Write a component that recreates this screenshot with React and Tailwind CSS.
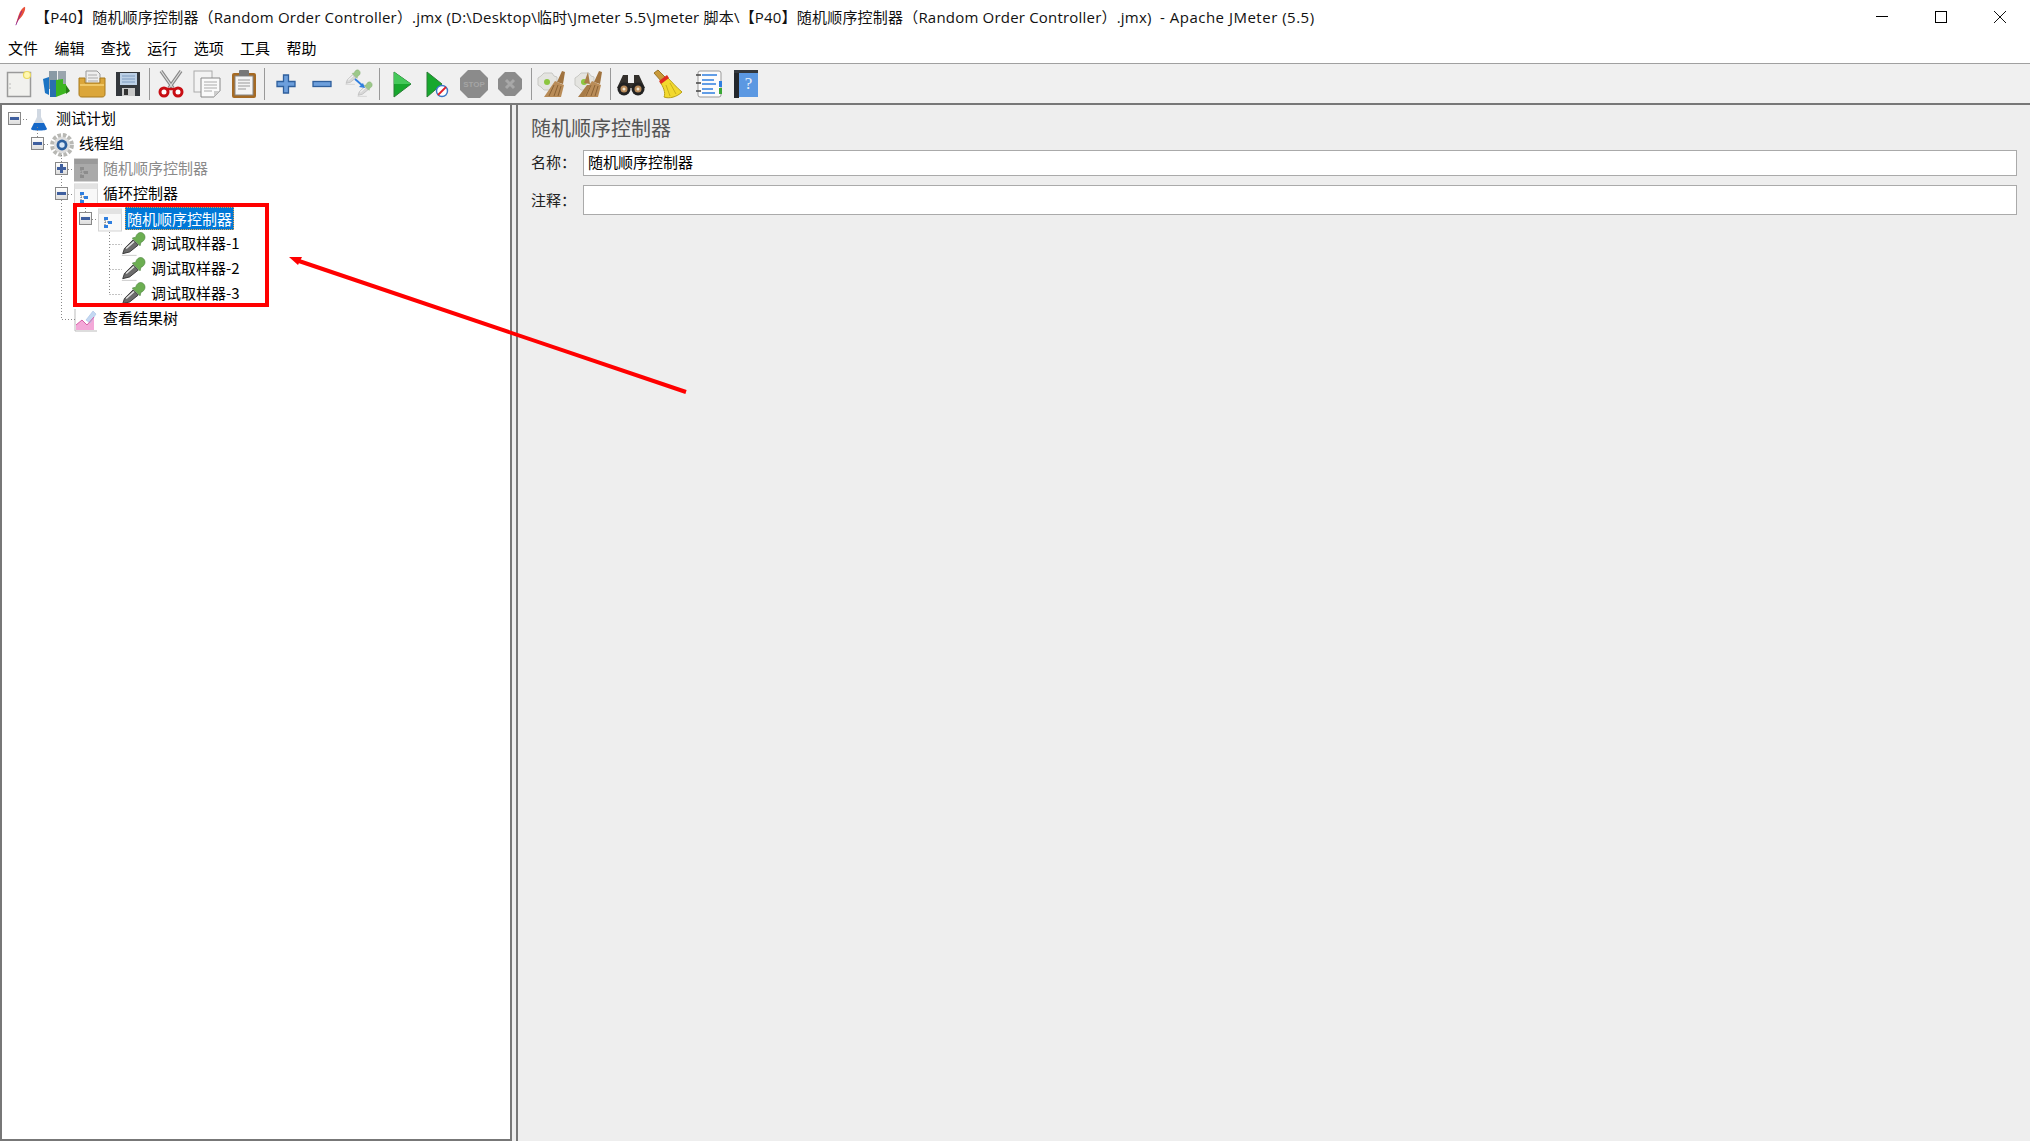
const CJK = `font-['Noto_Sans_CJK_SC','Noto_Sans',sans-serif]`;

function Svg({ children, className = 'w-[30px] h-[30px]' }) {
  return <svg viewBox="0 0 30 30" className={`shrink-0 ${className}`}>{children}</svg>;
}

const Dropper = ({ x = 0, y = 0, s = 1, pale }) => (
  <g transform={`translate(${x} ${y}) scale(${s})`}>
    <path d="M2 26 L4 20 L14 10 L20 16 L10 24 Z" fill={pale ? '#d8d8d8' : '#6c6c6c'} stroke={pale ? '#aaa' : '#2c2c2c'} strokeWidth="1" />
    <path d="M6 20 L15 12" stroke={pale ? '#fff' : '#e6e6e6'} strokeWidth="1.8" />
    <path d="M13 8 L22 17 L23 13 C28 11 29 6 26 3 C23 0 18 2 17 7 Z" fill={pale ? '#9cc88a' : '#6cae52'} stroke={pale ? '#7fa86c' : '#48803a'} strokeWidth="0.7" />
    <path d="M1 28 H18" stroke="#c4c4c4" strokeWidth="1" />
  </g>
);

function IconNew() {
  return (
    <Svg>
      <rect x="3.5" y="3.5" width="23" height="24" fill="#f1f1ee" stroke="#9a9a9a" strokeWidth="1.5" />
      <circle cx="6" cy="15" r="0.7" fill="#aaa" /><circle cx="6" cy="19" r="0.7" fill="#aaa" />
      <circle cx="23" cy="6" r="3.5" fill="#fff7b0" stroke="#e8d860" strokeWidth="1.2" />
    </Svg>
  );
}
function IconTemplates() {
  return (
    <Svg>
      <rect x="8" y="2" width="8" height="18" fill="#8a9aa5" /><rect x="17" y="2" width="8" height="18" fill="#9aa5ad" />
      <path d="M2 10 L8 8 V26 L4 24 Z" fill="#1c74c4" />
      <rect x="9" y="11" width="6" height="17" fill="#2a6fb0" />
      <path d="M15 11 L22 10 V15 L25 15 V24 L15 28 Z" fill="#3cb521" />
      <path d="M25 16 L29 22 L25 25 Z" fill="#2a7f18" />
    </Svg>
  );
}
function IconOpen() {
  return (
    <Svg>
      <path d="M9 2 H20 L23 5 V16 H9 Z" fill="#eee" stroke="#999" />
      <path d="M11 6 H20 M11 9 H21 M11 12 H21" stroke="#aaa" />
      <path d="M2 9 H8 V14 H23 V9 H28 V25 C28 27 27 28 25 28 H5 C3 28 2 27 2 25 Z" fill="#dba63a" stroke="#a87a1e" />
      <path d="M3 16 H27" stroke="#f0c868" strokeWidth="2" />
    </Svg>
  );
}
function IconSave() {
  return (
    <Svg>
      <path d="M3 3 H27 V27 H3 Z" fill="#33373c" />
      <rect x="7" y="4" width="17" height="12" fill="#bcd0e6" />
      <path d="M9 7 H22 M9 10 H22 M9 13 H22" stroke="#7e9cc0" />
      <rect x="9" y="19" width="13" height="8" fill="#c8c8c8" /><rect x="11" y="20" width="4" height="6" fill="#333" />
    </Svg>
  );
}
function IconCut() {
  return (
    <Svg>
      <path d="M5 2 L17 19 M25 2 L13 19" stroke="#888" strokeWidth="3.4" />
      <path d="M5 2 L17 19 M25 2 L13 19" stroke="#ddd" strokeWidth="1.2" />
      <circle cx="8" cy="23" r="4" fill="#fff" stroke="#c80e14" strokeWidth="3" />
      <circle cx="22" cy="23" r="4" fill="#fff" stroke="#c80e14" strokeWidth="3" />
      <path d="M11 20 H19" stroke="#c80e14" strokeWidth="2.5" />
    </Svg>
  );
}
function IconCopy() {
  return (
    <Svg>
      <rect x="2" y="2" width="18" height="21" fill="#f3f3f3" stroke="#aaa" />
      <path d="M9 9 H28 V22 L22 28 H9 Z" fill="#fafafa" stroke="#888" />
      <path d="M22 28 V22 H28 Z" fill="#ccc" />
      <path d="M12 13 H25 M12 16 H25 M12 19 H25 M12 22 H20" stroke="#aaa" />
    </Svg>
  );
}
function IconPaste() {
  return (
    <Svg>
      <rect x="3" y="4" width="24" height="25" rx="2" fill="#a56a24" />
      <rect x="6" y="7" width="18" height="19" fill="#f4f4f4" stroke="#888" />
      <rect x="10" y="1" width="10" height="6" rx="1" fill="#777" />
      <path d="M9 11 H21 M9 14 H21 M9 17 H21 M9 20 H17" stroke="#999" />
    </Svg>
  );
}
function IconPlus() {
  return (
    <Svg>
      <path d="M12.5 6 H17.5 V12.5 H24 V17.5 H17.5 V24 H12.5 V17.5 H6 V12.5 H12.5 Z" fill="#6d9fdc" stroke="#2f5f9c" strokeWidth="1.3" />
    </Svg>
  );
}
function IconMinus() {
  return (
    <Svg>
      <rect x="6" y="12.5" width="18" height="5" fill="#6d9fdc" stroke="#2f5f9c" strokeWidth="1.3" />
    </Svg>
  );
}
function IconToggle() {
  return (
    <Svg>
      <Dropper x="1" y="0" s="0.55" pale />
      <Dropper x="13" y="12" s="0.55" pale />
      <path d="M11 10 L19 17" stroke="#2f7fe0" strokeWidth="1.8" />
      <path d="M21 19 L15 18 L19 14 Z" fill="#2f7fe0" />
    </Svg>
  );
}
function IconRun() {
  return (
    <Svg>
      <path d="M8 3 L25 15 L8 28 Z" fill="#17a82d" stroke="#2a7d36" />
      <path d="M8 3 L25 15 L8 15 Z" fill="#45c85a" />
    </Svg>
  );
}
function IconRunNoTimer() {
  return (
    <Svg>
      <path d="M5 3 L20 15 L5 28 Z" fill="#17a82d" stroke="#2a7d36" />
      <circle cx="20" cy="22" r="5.5" fill="#fff" stroke="#3a78c8" strokeWidth="1.4" />
      <path d="M16 26 L24 18" stroke="#e0202a" strokeWidth="1.8" />
    </Svg>
  );
}
function IconStop() {
  return (
    <Svg>
      <path d="M9 1 H21 L29 9 V21 L21 29 H9 L1 21 V9 Z" fill="#8b8b8b" />
      <text x="15" y="18" textAnchor="middle" fontSize="8" fontWeight="700" fill="#a5a5a5" fontFamily="Liberation Sans">STOP</text>
    </Svg>
  );
}
function IconShutdown() {
  return (
    <Svg>
      <path d="M10 3 H20 L27 10 V20 L20 27 H10 L3 20 V10 Z" fill="#8b8b8b" />
      <path d="M11 11 L19 19 M19 11 L11 19" stroke="#a8a8a8" strokeWidth="3" />
    </Svg>
  );
}
function IconClear({ dense }) {
  return (
    <Svg className="w-[30px] h-[30px] -ml-[3px]">
      <path d="M8 4 H16 L18 7 L21 8 V18 L18 21 H8 L5 18 L2 16 V9 L5 7 Z" fill="#e4e4e0" stroke="#c8c8c4" />
      <circle cx="11" cy="13" r="3" fill="#8cc63f" />
      <path d="M26 2 L21 13 L27 15 L29 3 Z" fill="#a0733f" />
      <path d="M19 12 L8 28 H25 L28 16 Z" fill="#b98c58" />
      <path d="M18 16 L13 27 M22 16 L18 27 M25 17 L22 27" stroke="#8a6234" />
      {dense && <path d="M15 3 L11 14 L17 15 Z M14 16 L5 28 H11 L18 16 Z" fill="#a87c48" />}
    </Svg>
  );
}
function IconSearch() {
  return (
    <Svg>
      <path d="M7 6 H12 V14 H18 V6 H23 L29 19 H1 Z" fill="#33302c" />
      <circle cx="8" cy="20" r="6.5" fill="#222" /><circle cx="22" cy="20" r="6.5" fill="#222" />
      <circle cx="8" cy="20" r="3.5" fill="#b88b5a" /><circle cx="22" cy="20" r="3.5" fill="#b88b5a" />
      <circle cx="8" cy="20" r="1.5" fill="#f2e6d0" /><circle cx="22" cy="20" r="1.5" fill="#f2e6d0" />
    </Svg>
  );
}
function IconBroom() {
  return (
    <Svg>
      <path d="M1 4 L5 1 L13 9 L9 13 Z" fill="#c99a3a" stroke="#9a7424" />
      <path d="M7 13 L14 8 C19 13 24 19 29 23 C24 28 16 30 11 28 C13 24 10 17 7 13 Z" fill="#f2d92e" stroke="#b8a018" />
      <path d="M6 12 L14 6 L16 9 L8 15 Z" fill="#e02a20" />
      <path d="M13 16 L17 27 M17 14 L23 25" stroke="#c8ae1c" />
    </Svg>
  );
}
function IconFunction() {
  return (
    <Svg>
      <rect x="4" y="2" width="23" height="26" rx="2" fill="#fbfbfb" stroke="#999" />
      <path d="M8 6 H23 M8 11 H20 M8 15 H22 M8 20 H19 M8 24 H21" stroke="#2f7fe0" strokeWidth="1.6" />
      <path d="M2 6 H7 M2 14 H7 M2 22 H7" stroke="#444" strokeWidth="1.5" />
      <rect x="25" y="12" width="3" height="6" fill="#2f7fe0" /><rect x="25" y="19" width="3" height="6" fill="#3aa835" />
    </Svg>
  );
}
function IconHelp() {
  return (
    <Svg>
      <rect x="3" y="1" width="5" height="28" fill="#23272c" />
      <rect x="8" y="2" width="19" height="26" fill="#5b98e2" />
      <rect x="3" y="1" width="24" height="3" fill="#33383e" />
      <text x="17.5" y="20" textAnchor="middle" fontSize="17" fill="#e8f0fa" fontFamily="Liberation Serif">?</text>
    </Svg>
  );
}

function Sep() {
  return <div className="w-px h-[32px] bg-[#999] mx-[2.5px] shrink-0" />;
}
function Tool({ children }) {
  return <div className="w-[36.4px] h-[40px] flex items-center justify-center shrink-0">{children}</div>;
}

function Toolbar() {
  return (
    <div className="h-[41px] bg-[#f0f0f0] border-b-2 border-[#777] flex items-center pl-px">
      <Tool><IconNew /></Tool><Tool><IconTemplates /></Tool><Tool><IconOpen /></Tool><Tool><IconSave /></Tool>
      <Sep />
      <Tool><IconCut /></Tool><Tool><IconCopy /></Tool><Tool><IconPaste /></Tool>
      <Sep />
      <Tool><IconPlus /></Tool><Tool><IconMinus /></Tool><Tool><IconToggle /></Tool>
      <Sep />
      <Tool><IconRun /></Tool><Tool><IconRunNoTimer /></Tool><Tool><IconStop /></Tool><Tool><IconShutdown /></Tool>
      <Sep />
      <Tool><IconClear /></Tool><Tool><IconClear dense /></Tool>
      <Sep />
      <Tool><IconSearch /></Tool><Tool><IconBroom /></Tool>
      <div className="w-[5px] shrink-0" />
      <Tool><IconFunction /></Tool><Tool><IconHelp /></Tool>
    </div>
  );
}

function Toggle({ open }) {
  return (
    <div className="w-[13px] h-[13px] border border-[#888] bg-gradient-to-b from-white to-[#ddd] flex items-center justify-center relative shrink-0">
      <div className="w-[9px] h-[3px] bg-[#3f5f9f]" />
      {!open && <div className="absolute w-[3px] h-[9px] bg-[#3f5f9f]" />}
    </div>
  );
}

function Flask() {
  return (
    <svg viewBox="0 0 24 24" className="w-[24px] h-[24px] shrink-0">
      <path d="M10 1 H14 V9 L20 21 H4 L10 9 Z" fill="#d0d8e2" />
      <path d="M7 15 H17 L20 21 C20 23 4 23 4 21 Z" fill="#1668c8" />
    </svg>
  );
}
function Gear() {
  return (
    <svg viewBox="0 0 24 24" className="w-[26px] h-[26px] shrink-0">
      <circle cx="12" cy="12" r="8.5" fill="none" stroke="#b8b8b4" strokeWidth="5" strokeDasharray="3 1.5" />
      <circle cx="12" cy="12" r="7.5" fill="#ddd" />
      <circle cx="12" cy="12" r="5" fill="#2c5f9e" />
      <circle cx="12" cy="12" r="2.5" fill="#d8e6f5" />
    </svg>
  );
}
function Ctrl({ off }) {
  return (
    <svg viewBox="0 0 24 24" className="w-[24px] h-[24px] shrink-0">
      <rect x="0.5" y="1" width="23" height="22" fill={off ? '#a9a9a9' : '#f8f8f8'} stroke={off ? '#a9a9a9' : '#d4d4d4'} />
      <rect x="0.5" y="1" width="23" height="5" fill={off ? '#999' : '#e2e2e2'} />
      <path d="M7 10 V19 M7 14 H11" stroke={off ? '#888' : '#666'} strokeDasharray="1 1" />
      <rect x="6" y="9" width="4" height="3" fill={off ? '#8c8c8c' : '#2f7fe0'} />
      <rect x="10" y="13" width="4" height="3" fill={off ? '#8c8c8c' : '#2f7fe0'} />
      <rect x="6" y="17" width="4" height="3" fill={off ? '#8c8c8c' : '#2f7fe0'} />
    </svg>
  );
}
function SamplerIcon() {
  return (
    <svg viewBox="0 0 30 30" className="w-[26px] h-[26px] shrink-0 overflow-visible">
      <Dropper x="0" y="-1" s="1" />
    </svg>
  );
}
function Results() {
  return (
    <svg viewBox="0 0 24 24" className="w-[24px] h-[24px] shrink-0">
      <path d="M1 1 V23 H23" fill="none" stroke="#bbb" />
      <path d="M2 22 V17 L8 12 L13 17 L20 9 V22 Z" fill="#f3a8d8" />
      <path d="M12 12 L19 3 L22 6 L16 15 Z" fill="#c4d8f2" stroke="#9ab8e0" strokeWidth="0.5" />
      <path d="M2 17 L8 12 L13 17 L20 9" fill="none" stroke="#d860a8" />
    </svg>
  );
}

function Row({ className, toggle, icon, children, text = 'text-black', selected }) {
  return (
    <div className={`h-[25px] flex items-center ${className}`}>
      <div className="w-[13px] mr-[6px] flex justify-center shrink-0">{toggle}</div>
      <div className="w-[24px] h-[24px] flex items-center justify-center mt-[3px] shrink-0">{icon}</div>
      {selected ? (
        <span className="ml-[3px] px-[1px] h-[23px] leading-[21px] bg-[#0078d7] text-white border border-dotted border-[#e8a040]">{children}</span>
      ) : (
        <span className={`ml-[5px] ${text}`}>{children}</span>
      )}
    </div>
  );
}

function Tree() {
  return (
    <div className="relative pt-px text-[15px] h-full">
      <svg className="absolute inset-0 w-[510px] h-[300px] pointer-events-none" fill="none" stroke="#888" strokeDasharray="1 2">
        <path d="M18 14.5 H26" />
        <path d="M35.5 22 V32" />
        <path d="M42 39.5 H48" />
        <path d="M59.5 50 V214.5 H74" />
        <path d="M66 64.5 H72 M66 89.5 H72" />
        <path d="M83.5 100 V107" />
        <path d="M90 114.5 H96" />
        <path d="M107.5 127 V189.5 M107.5 139.5 H120 M107.5 164.5 H120 M107.5 189.5 H120" />
      </svg>
      <Row className="pl-[6px]" toggle={<Toggle open />} icon={<Flask />}>测试计划</Row>
      <Row className="pl-[29px]" toggle={<Toggle open />} icon={<Gear />}>线程组</Row>
      <Row className="pl-[53px]" toggle={<Toggle />} icon={<Ctrl off />} text="text-[#8a8a8a]">随机顺序控制器</Row>
      <Row className="pl-[53px]" toggle={<Toggle open />} icon={<Ctrl />}>循环控制器</Row>
      <Row className="pl-[77px]" toggle={<Toggle open />} icon={<Ctrl />} selected>随机顺序控制器</Row>
      <Row className="pl-[101px]" icon={<SamplerIcon />}>调试取样器-1</Row>
      <Row className="pl-[101px]" icon={<SamplerIcon />}>调试取样器-2</Row>
      <Row className="pl-[101px]" icon={<SamplerIcon />}>调试取样器-3</Row>
      <Row className="pl-[53px]" icon={<Results />}>查看结果树</Row>
    </div>
  );
}

function Field({ label, value, className, raise = '' }) {
  return (
    <div className={`flex items-center ${className}`}>
      <div className={`w-[52px] text-[15px] text-[#222] shrink-0 ${raise}`}>{label}</div>
      <div className={`flex-1 h-full bg-white border border-[#aaa] text-[15px] pl-[4px] flex items-center text-black ${raise}`}>{value}</div>
    </div>
  );
}

export default function App() {
  return (
    <div className={`relative w-[2030px] h-[1141px] overflow-hidden bg-[#eeeeee] flex flex-col ${CJK}`}>
      <div className="h-[32px] pt-[3px] bg-white flex items-center shrink-0">
        <svg viewBox="0 0 16 24" className="w-[14px] h-[20px] ml-[13px] mr-[8px] -mt-[3px] shrink-0">
          <path d="M3 22 L6 12 C8 6 11 2 14 1 C15 5 12 12 6 17 Z" fill="#e8503a" />
          <path d="M3 23 L10 6" stroke="#8a2090" strokeWidth="1" />
        </svg>
        <span className="text-[15px] text-[#111] whitespace-nowrap font-['Open_Sans','Noto_Sans_CJK_SC',sans-serif] tracking-[0.2px]">
          【P40】随机顺序控制器（Random Order Controller）.jmx (D:\Desktop\临时\Jmeter 5.5\Jmeter 脚本\【P40】随机顺序控制器（Random Order Controller）.jmx)
          <span className="ml-[4px] tracking-[0.5px]"> - Apache JMeter (5.5)</span>
        </span>
        <div className="ml-auto flex items-center shrink-0 -mt-[2px]">
          <div className="w-[58px] flex justify-center"><div className="w-[12px] h-px bg-black" /></div>
          <div className="w-[59px] flex justify-center"><div className="w-[12px] h-[12px] border border-black" /></div>
          <div className="w-[59px] mr-px flex justify-center">
            <svg viewBox="0 0 12 12" className="w-[12px] h-[12px]"><path d="M0 0 L12 12 M12 0 L0 12" stroke="#111" /></svg>
          </div>
        </div>
      </div>

      <div className="h-[32px] pt-[2px] bg-white border-b border-[#a0a0a0] flex items-center gap-[16.4px] pl-[8px] text-[15px] text-black shrink-0">
        {['文件', '编辑', '查找', '运行', '选项', '工具', '帮助'].map((m) => <span key={m}>{m}</span>)}
      </div>

      <Toolbar />

      <div className="flex-1 flex min-h-0">
        <div className="w-[512px] bg-white border-l-2 border-r-2 border-b-2 border-[#777] shrink-0">
          <Tree />
        </div>
        <div className="flex-1 ml-[4px] border-l-2 border-[#777] pl-[13px] pr-[13px]">
          <div className="text-[20px] text-[#555] leading-[28px] mt-[9px] mb-[8px]">随机顺序控制器</div>
          <Field label="名称：" value="随机顺序控制器" className="h-[26px]" raise="pb-[2px]" />
          <Field label="注释：" className="h-[30px] mt-[9px]" />
        </div>
      </div>

      <div className="absolute left-[73px] top-[203px] w-[196px] h-[104px] border-4 border-[#f00]" />
      <svg className="absolute left-[280px] top-[245px] w-[420px] h-[160px] overflow-visible">
        <path d="M406 147 L16 15" stroke="#f00" strokeWidth="4" />
        <path d="M9 12 L22 12 L18 20 Z" fill="#f00" />
      </svg>
    </div>
  );
}
